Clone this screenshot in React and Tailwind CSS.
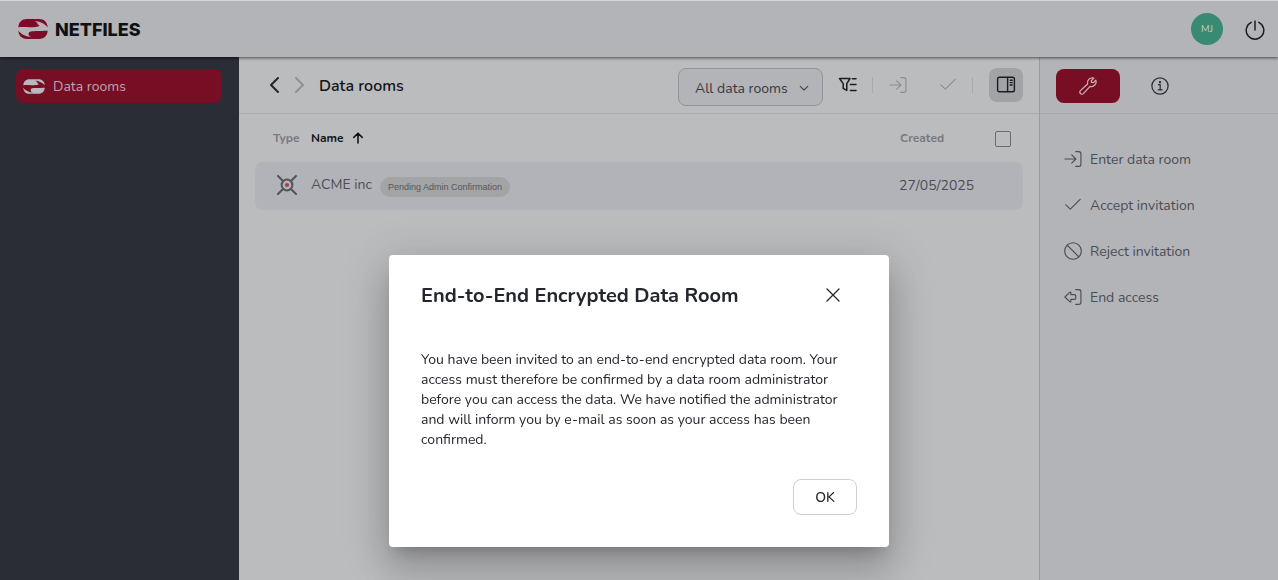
function Stroke({ children, className, width = 1.25, box = "0 0 20 20" }) {
  return (
    <svg
      viewBox={box}
      className={className}
      fill="none"
      stroke="currentColor"
      strokeWidth={width}
      strokeLinecap="round"
      strokeLinejoin="round"
      aria-hidden="true"
    >
      {children}
    </svg>
  );
}

function Logo({ className }) {
  return (
    <svg viewBox="0 0 30 20" className={className} fill="currentColor" aria-hidden="true">
      <path d="M0.3 8.2C0.8 3.2 3.6 0 9 0H21C26.4 0 29.2 3.2 29.8 8.4C27.4 5.2 23.4 2.8 16.4 1.7C19 3 19.8 4.2 19.6 5.4C22.6 6.4 21.6 7.4 17.6 7.9C13 8.4 5 7.9 0.3 8.2Z" />
      <path d="M29.7 11.8C29.2 16.8 26.4 20 21 20H9C3.6 20 0.8 16.8 0.2 11.6C2.6 14.8 6.6 17.2 13.6 18.3C11 17 10.2 15.8 10.6 14.4C10.8 13 12 12.5 14.4 12.2C18 11.7 25 12.1 29.7 11.8Z" />
    </svg>
  );
}

function EnterIcon({ className }) {
  return (
    <Stroke className={className}>
      <path d="M1 10H13M8.6 5.4L13.2 10L8.6 14.6M13 1.8H16.4A2.4 2.4 0 0 1 18.8 4.2V15.8A2.4 2.4 0 0 1 16.4 18.2H13" />
    </Stroke>
  );
}

function CheckIcon({ className }) {
  return (
    <Stroke className={className}>
      <path d="M2 9.8L7 14.6L18 3.8" />
    </Stroke>
  );
}

function RejectIcon({ className }) {
  return (
    <Stroke className={className}>
      <circle cx="10" cy="10" r="9.2" />
      <path d="M3.6 3.6L16.4 16.4" />
    </Stroke>
  );
}

function EndIcon({ className }) {
  return (
    <Stroke className={className}>
      <path d="M13 1.8H16.4A2.4 2.4 0 0 1 18.8 4.2V15.8A2.4 2.4 0 0 1 16.4 18.2H13" />
      <path d="M1 10L6.6 4.6C7 4.2 7.6 4.5 7.6 5.1V7.4H12A1 1 0 0 1 13 8.4V11.6A1 1 0 0 1 12 12.6H7.6V14.9C7.6 15.5 7 15.8 6.6 15.4Z" />
    </Stroke>
  );
}

const actions = [
  { label: "Enter data room", Icon: EnterIcon },
  { label: "Accept invitation", Icon: CheckIcon },
  { label: "Reject invitation", Icon: RejectIcon },
  { label: "End access", Icon: EndIcon },
];

function Header() {
  return (
    <header className="relative z-10 flex h-[57px] shrink-0 items-center justify-between border-t border-[#d3d6da] bg-[#b3b4b8] pr-[11px] pl-[18px] shadow-[0_1px_3px_rgba(0,0,0,0.6)]">
      <a href="#" className="flex items-center gap-[7px] text-[#0f1114]">
        <Logo className="h-5 w-[30px] text-[#7d0a26]" />
        <span className="pt-0.5 font-['Inter'] text-lg leading-6 font-extrabold">NETFILES</span>
      </a>
      <div className="flex items-center gap-5">
        <button className="size-8 rounded-full bg-[#398a72] text-[10px] text-[#c3cfcd]">MJ</button>
        <button aria-label="Log out" className="grid size-6 place-items-center text-[#1d1f26]">
          <Stroke className="mt-0.5 size-5" width={1.5}>
            <path d="M10 1V10M6.2 2.4A8.8 8.8 0 1 0 13.8 2.4" />
          </Stroke>
        </button>
      </div>
    </header>
  );
}

function Sidebar() {
  return (
    <nav className="w-[239px] shrink-0 bg-[#2a2d35] px-4 py-3">
      <a href="#" className="flex h-[34px] w-[206px] items-center gap-2 rounded-lg bg-[#780e24] pl-[7px] text-sm text-[#b7a5ad]">
        <Logo className="h-[15px] w-[22px] text-[#b9b9bd]" />
        <span className="pt-0.5">Data rooms</span>
      </a>
    </nav>
  );
}

function Toolbar() {
  return (
    <div className="flex h-[57px] items-start justify-between border-b border-[#a9abaf] pt-[11px] pr-4 pl-6">
      <div className="flex h-[34px] items-center">
        <button aria-label="Back" className="grid size-6 place-items-center text-[#23242f]">
          <Stroke className="size-5" width={2}>
            <path d="M13 3L6 10L13 17" />
          </Stroke>
        </button>
        <button aria-label="Forward" className="grid size-6 place-items-center text-[#8f9095]">
          <Stroke className="size-5" width={2}>
            <path d="M7 3L14 10L7 17" />
          </Stroke>
        </button>
        <h1 className="ml-2 pt-0.5 text-base leading-6 font-semibold text-[#131418]">Data rooms</h1>
      </div>
      <div className="flex items-start">
        <div className="relative mr-2">
          <select
            aria-label="Filter data rooms"
            className="h-[38px] w-[145px] appearance-none rounded-lg border border-[#93959c] bg-[#b3b4b8] pt-1 pl-4 text-sm text-[#363840]"
          >
            <option>All data rooms</option>
          </select>
          <Stroke className="pointer-events-none absolute top-[15px] right-[14px] size-[10px] text-[#43454d]" width={1.1} box="0 0 10 10">
            <path d="M1.2 3.4L5 7L8.8 3.4" />
          </Stroke>
        </div>
        <div className="flex h-[34px] items-center">
          <button aria-label="Filter" className="grid size-[34px] place-items-center text-[#1b1d22]">
            <Stroke className="size-5" width={1.5}>
              <path d="M1.5 3.5H12L8.8 8.6V15.4L5.2 13.4V8.6Z" />
              <path d="M14.4 3.8H18M12.4 9.6H18M12.4 15.6H18" />
            </Stroke>
          </button>
          <span className="mx-[7px] h-4 w-px bg-[#a8aaae]" />
          <button aria-label="Enter data room" disabled className="grid size-9 place-items-center text-[#8b8d92]">
            <EnterIcon className="size-[18px]" />
          </button>
          <span className="w-[14px]" />
          <button aria-label="Accept invitation" disabled className="grid size-9 place-items-center text-[#8b8d92]">
            <CheckIcon className="size-[18px]" />
          </button>
          <span className="mr-4 ml-1.5 h-4 w-px bg-[#a8aaae]" />
          <button aria-label="Toggle details" className="grid size-[34px] place-items-center rounded-lg bg-[#a1a3a7] text-[#1b1d22]">
            <Stroke className="size-5" width={1.4}>
              <rect x="1.6" y="2.2" width="16.8" height="14.6" rx="1.8" />
              <path d="M11.6 2.4V16.6M14.2 5.2H16.2M14.2 7.6H16.2M14.2 10H16.2" />
            </Stroke>
          </button>
        </div>
      </div>
    </div>
  );
}

function RoomTable() {
  return (
    <div className="px-4">
      <table className="w-full table-fixed border-separate border-spacing-0 text-left">
        <thead className="text-xs text-[#787a81]">
          <tr className="h-12">
            <th className="w-14 pr-0 pl-[18px] font-bold">Type</th>
            <th className="font-bold text-[#131418]">
              <span className="flex items-center gap-2">
                Name
                <Stroke className="size-3" width={1.6} box="0 0 12 12">
                  <path d="M6 11V1.4M1.8 5.4L6 1.2L10.2 5.4" />
                </Stroke>
              </span>
            </th>
            <th className="w-24 pl-px font-bold">Created</th>
            <th className="w-7">
              <input
                type="checkbox"
                aria-label="Select all"
                className="mt-0.5 block size-4 appearance-none rounded-xs border border-[#6a6c72]"
              />
            </th>
          </tr>
        </thead>
        <tbody className="text-sm text-[#4c4e54]">
          <tr className="h-12">
            <td className="rounded-l-lg bg-[#b2b3b8] pb-0.5 pl-[22px]">
              <svg viewBox="0 0 20 20" className="size-5" fill="none" stroke="#4f555a" strokeWidth="2" strokeLinecap="round" aria-hidden="true">
                <circle cx="10" cy="10" r="5.4" />
                <path d="M1 1L6 6M19 1L14 6M1 19L6 14M19 19L14 14" />
                <circle cx="10" cy="10" r="2.1" fill="#ad3c4a" stroke="none" />
              </svg>
            </td>
            <td className="bg-[#b2b3b8] pb-0.5">
              <span className="flex items-center gap-2">
                ACME inc
                <span className="mt-1 rounded-full bg-[#a3a4a6] px-2 font-['Liberation_Sans'] text-[9px] leading-5 text-[#55575b]">
                  Pending Admin Confirmation
                </span>
              </span>
            </td>
            <td className="bg-[#b2b3b8]">27/05/2025</td>
            <td className="rounded-r-lg bg-[#b2b3b8]" />
          </tr>
        </tbody>
      </table>
    </div>
  );
}

function DetailsPanel() {
  return (
    <aside className="w-[239px] shrink-0 border-l border-[#989a9f] bg-[#b3b4b8]">
      <div className="flex h-[57px] gap-2 border-b border-[#a6a8ac] px-4 pt-3">
        <button aria-label="Actions" className="grid h-[34px] w-16 place-items-center rounded-lg bg-[#780e24] text-[#c5b3ba]">
          <Stroke className="size-5">
            <path d="M15.9 2.1A4.9 4.9 0 0 0 9.6 8L2.4 14.6A2.1 2.1 0 0 0 5.4 17.6L12 10.4A4.9 4.9 0 0 0 17.9 4.1L15.3 6.7L13.5 6.5L13.3 4.7Z" />
          </Stroke>
        </button>
        <button aria-label="Information" className="grid h-[34px] w-16 place-items-center text-[#2b2d35]">
          <Stroke className="size-[18px]" width={1.4}>
            <circle cx="10" cy="10" r="9" />
            <path d="M8.4 8.6H10.2V14.2M8 14.2H12.4" />
            <circle cx="10" cy="5.7" r="0.6" fill="currentColor" />
          </Stroke>
        </button>
      </div>
      <ul className="flex flex-col px-6 pt-[22px] text-sm text-[#4b4d53]">
        {actions.map(({ label, Icon }) => (
          <li key={label}>
            <button className="flex h-[46px] items-center gap-2">
              <Icon className="size-[18px]" />
              <span className="pt-0.5">{label}</span>
            </button>
          </li>
        ))}
      </ul>
    </aside>
  );
}

function InvitationDialog() {
  return (
    <div className="fixed inset-0 z-20 flex items-end justify-center pb-[33px]">
      <section
        role="dialog"
        aria-modal="true"
        aria-labelledby="dialog-title"
        className="w-full max-w-[500px] rounded bg-white px-8 pt-6 pb-8 text-[#23262e] shadow-[0_11px_15px_-7px_rgba(0,0,0,0.2),0_24px_38px_3px_rgba(0,0,0,0.14),0_9px_46px_8px_rgba(0,0,0,0.12)]"
      >
        <div className="flex items-start justify-between pr-2">
          <h2 id="dialog-title" className="text-xl leading-[34px] font-bold">
            End-to-End Encrypted Data Room
          </h2>
          <button aria-label="Close" className="grid size-8 place-items-center">
            <Stroke className="size-4" width={1.3} box="0 0 16 16">
              <path d="M2 2L14 14M14 2L2 14" />
            </Stroke>
          </button>
        </div>
        <p className="mt-[37px] text-sm leading-5">
          You have been invited to an end-to-end encrypted data room. Your access must therefore be confirmed by a
          data room administrator before you can access the data. We have notified the administrator and will inform
          you by e-mail as soon as your access has been confirmed.
        </p>
        <div className="mt-[29px] flex justify-end">
          <button className="h-9 w-16 rounded-lg border border-[#cfcfd2] pt-0.5 text-sm font-medium">OK</button>
        </div>
      </section>
    </div>
  );
}

export default function App() {
  return (
    <div className="flex min-h-screen flex-col bg-[#bbbcbe] font-['Nunito','Noto_Sans',sans-serif]">
      <Header />
      <div className="flex grow">
        <Sidebar />
        <main className="min-w-0 grow">
          <Toolbar />
          <RoomTable />
        </main>
        <DetailsPanel />
      </div>
      <InvitationDialog />
    </div>
  );
}
